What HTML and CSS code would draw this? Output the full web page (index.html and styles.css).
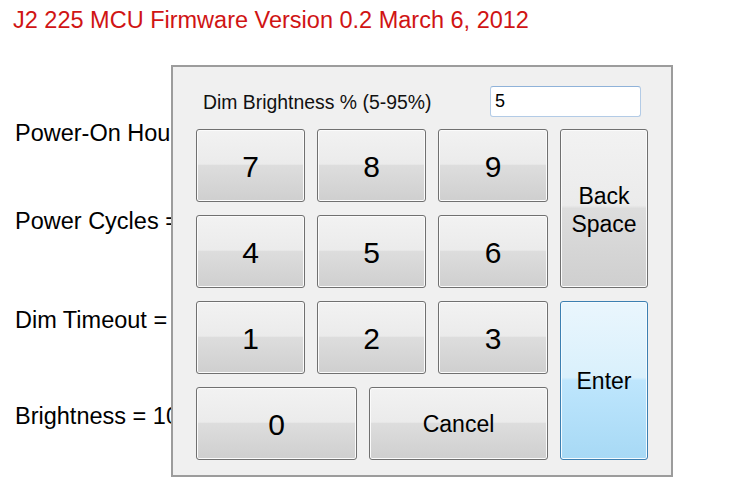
FILE: index.html
```html
<!DOCTYPE html>
<html lang="en">
<head>
    <meta charset="UTF-8">
    <meta name="viewport" content="width=device-width, initial-scale=1.0">
    <title>J2 225 MCU Firmware</title>
    <link rel="stylesheet" href="styles.css">
</head>
<body>
    <div class="page">
        <h1 class="title">J2 225 MCU Firmware Version 0.2 March 6, 2012</h1>

        <div class="stats">
            <p class="stat">Power-On Hours = 1204</p>
            <p class="stat">Power Cycles = 312</p>
            <p class="stat">Dim Timeout = 30</p>
            <p class="stat">Brightness = 100</p>
        </div>
    </div>

    <!-- keypad dialog on top of the main page -->
    <div class="dialog">
        <div class="dialog-head">
            <label for="value" class="dialog-label">Dim Brightness % (5-95%)</label>
            <input id="value" class="dialog-input" type="text" value="5">
        </div>

        <div class="keypad">
            <button class="key digit">7</button>
            <button class="key digit">8</button>
            <button class="key digit">9</button>
            <button class="key word key-back">Back<br>Space</button>

            <button class="key digit">4</button>
            <button class="key digit">5</button>
            <button class="key digit">6</button>

            <button class="key digit">1</button>
            <button class="key digit">2</button>
            <button class="key digit">3</button>
            <button class="key word key-enter">Enter</button>

            <div class="bottom-row">
                <button class="key digit key-zero">0</button>
                <button class="key word key-cancel">Cancel</button>
            </div>
        </div>
    </div>
</body>
</html>
```

FILE: styles.css
```css
* {
    margin: 0;
    padding: 0;
    box-sizing: border-box;
}

body {
    font-family: 'Liberation Sans', Arial, sans-serif;
    background: #fff;
    color: #000;
    width: 730px;
    height: 504px;
    overflow: hidden;
}

/* Main page behind the dialog */
.page {
    padding: 7px 0 0 13px;
}

.title {
    font-size: 23.5px;
    font-weight: normal;
    line-height: 26px;
    color: #d01414;
}

.stats {
    display: grid;
    grid-template-rows: 88px 99px 96px 26px;
    margin-top: 87px;
    padding-left: 2px;
}

.stat {
    font-size: 23.5px;
    line-height: 26px;
    white-space: nowrap;
}

/* Keypad dialog */
.dialog {
    position: absolute;
    top: 65px;
    left: 171px;
    width: 502px;
    height: 412px;
    background: #f0f0f0;
    border: 2px solid #9c9c9c;
    padding: 19px 0 0 23px;
}

.dialog-head {
    display: flex;
    align-items: center;
    height: 31px;
    margin-bottom: 12px;
}

.dialog-label {
    font-size: 19.4px;
    width: 294px;
    padding-left: 7px;
    padding-top: 1px;
    color: #111;
}

.dialog-input {
    width: 151px;
    height: 31px;
    border: 1px solid #b3cbe6;
    border-top-color: #8fb2d9;
    border-radius: 3px;
    background: #fff;
    padding-left: 4px;
    font-family: 'Liberation Sans', Arial, sans-serif;
    font-size: 18px;
    color: #000;
    outline: none;
}

.keypad {
    display: grid;
    grid-template-columns: 109px 109px 110px 88px;
    grid-template-rows: 73px 73px 73px 73px;
    gap: 13px 12px;
}

.key {
    border: 1px solid #707070;
    border-radius: 3px;
    background: linear-gradient(#f2f2f2, #ebebeb 48%, #dddddd 50%, #cfcfcf);
    box-shadow: inset 0 0 0 1px #fbfbfb;
    font-family: 'Liberation Sans', Arial, sans-serif;
    color: #000;
    cursor: pointer;
}

.digit {
    font-size: 30px;
    padding-top: 2px;
}

.word {
    font-size: 23px;
    line-height: 28px;
}

.key-back {
    grid-column: 4;
    grid-row: 1 / span 2;
    padding-top: 2px;
}

.key-enter {
    grid-column: 4;
    grid-row: 3 / span 2;
    border-color: #3c7fb1;
    background: linear-gradient(#eaf6fd, #d9f0fc 48%, #bee6fd 50%, #a7d9f5);
    box-shadow: inset 0 0 0 1px #f4fbff;
}

.bottom-row {
    grid-column: 1 / span 3;
    grid-row: 4;
    display: flex;
    gap: 12px;
}

.key-zero {
    width: 161px;
}

.key-cancel {
    flex: 1;
}
```
